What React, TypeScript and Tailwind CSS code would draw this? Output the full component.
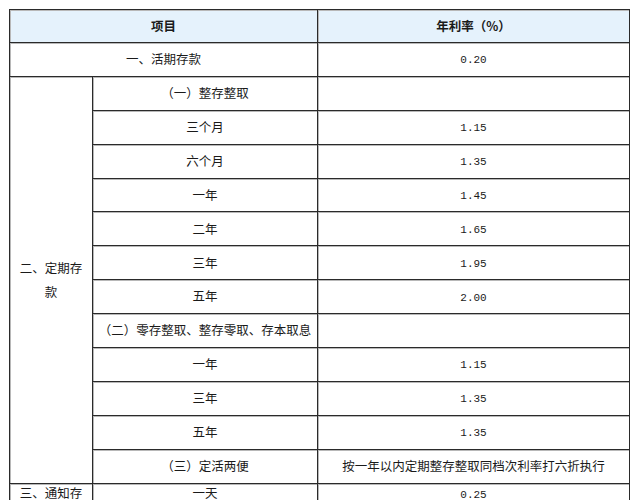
import React from "react";

const cjk = { fontFamily: '"Noto Sans CJK SC", "Noto Sans", sans-serif' };
const mono = { fontFamily: '"Liberation Mono", "DejaVu Sans Mono", monospace' };

const base =
  "border border-[#2a2a2a] shadow-[inset_1px_1px_0_#b8b8b8] text-center p-0 text-[#1a1a1a]";
const cell = base + " align-middle h-[33.9px]";
const topCell = base + " align-top pt-[3px]";

function Num({ v }: { v: string }) {
  return (
    <span className="text-[11px]" style={mono}>
      {v}
    </span>
  );
}

type Row = { label: string; rate?: string; rateText?: string };

const fixedRows: Row[] = [
  { label: "（一）整存整取" },
  { label: "三个月", rate: "1.15" },
  { label: "六个月", rate: "1.35" },
  { label: "一年", rate: "1.45" },
  { label: "二年", rate: "1.65" },
  { label: "三年", rate: "1.95" },
  { label: "五年", rate: "2.00" },
  { label: "（二）零存整取、整存零取、存本取息" },
  { label: "一年", rate: "1.15" },
  { label: "三年", rate: "1.35" },
  { label: "五年", rate: "1.35" },
  { label: "（三）定活两便", rateText: "按一年以内定期整存整取同档次利率打六折执行" },
];

export default function App() {
  return (
    <div className="bg-white w-[635px] h-[500px] overflow-hidden pt-[9px] pl-[9px]" style={cjk}>
      <table className="table-fixed border-collapse w-[620px] text-[12.5px] leading-none">
        <colgroup>
          <col className="w-[83px]" />
          <col className="w-[225px]" />
          <col className="w-[312px]" />
        </colgroup>
        <tbody>
          <tr>
            <td colSpan={2} className={cell + " bg-[#e5f2fc] font-bold h-[33px]"}>
              项目
            </td>
            <td className={cell + " bg-[#e5f2fc] font-bold h-[33px]"}>年利率（%）</td>
          </tr>
          <tr>
            <td colSpan={2} className={cell}>
              一、活期存款
            </td>
            <td className={cell}>
              <Num v="0.20" />
            </td>
          </tr>
          {fixedRows.map((r, i) => (
            <tr key={"f" + i}>
              {i === 0 && (
                <td rowSpan={fixedRows.length} className={cell + " px-[6px] leading-[24px]"}>
                  二、定期存款
                </td>
              )}
              <td className={cell}>{r.label}</td>
              <td className={cell}>
                {r.rate ? <Num v={r.rate} /> : r.rateText ? <span>{r.rateText}</span> : null}
              </td>
            </tr>
          ))}
          <tr>
            <td className={topCell + " px-[6px] pt-[2px] h-[20px] whitespace-nowrap overflow-hidden"}>三、通知存</td>
            <td className={topCell}>一天</td>
            <td className={topCell}>
              <Num v="0.25" />
            </td>
          </tr>
        </tbody>
      </table>
    </div>
  );
}
